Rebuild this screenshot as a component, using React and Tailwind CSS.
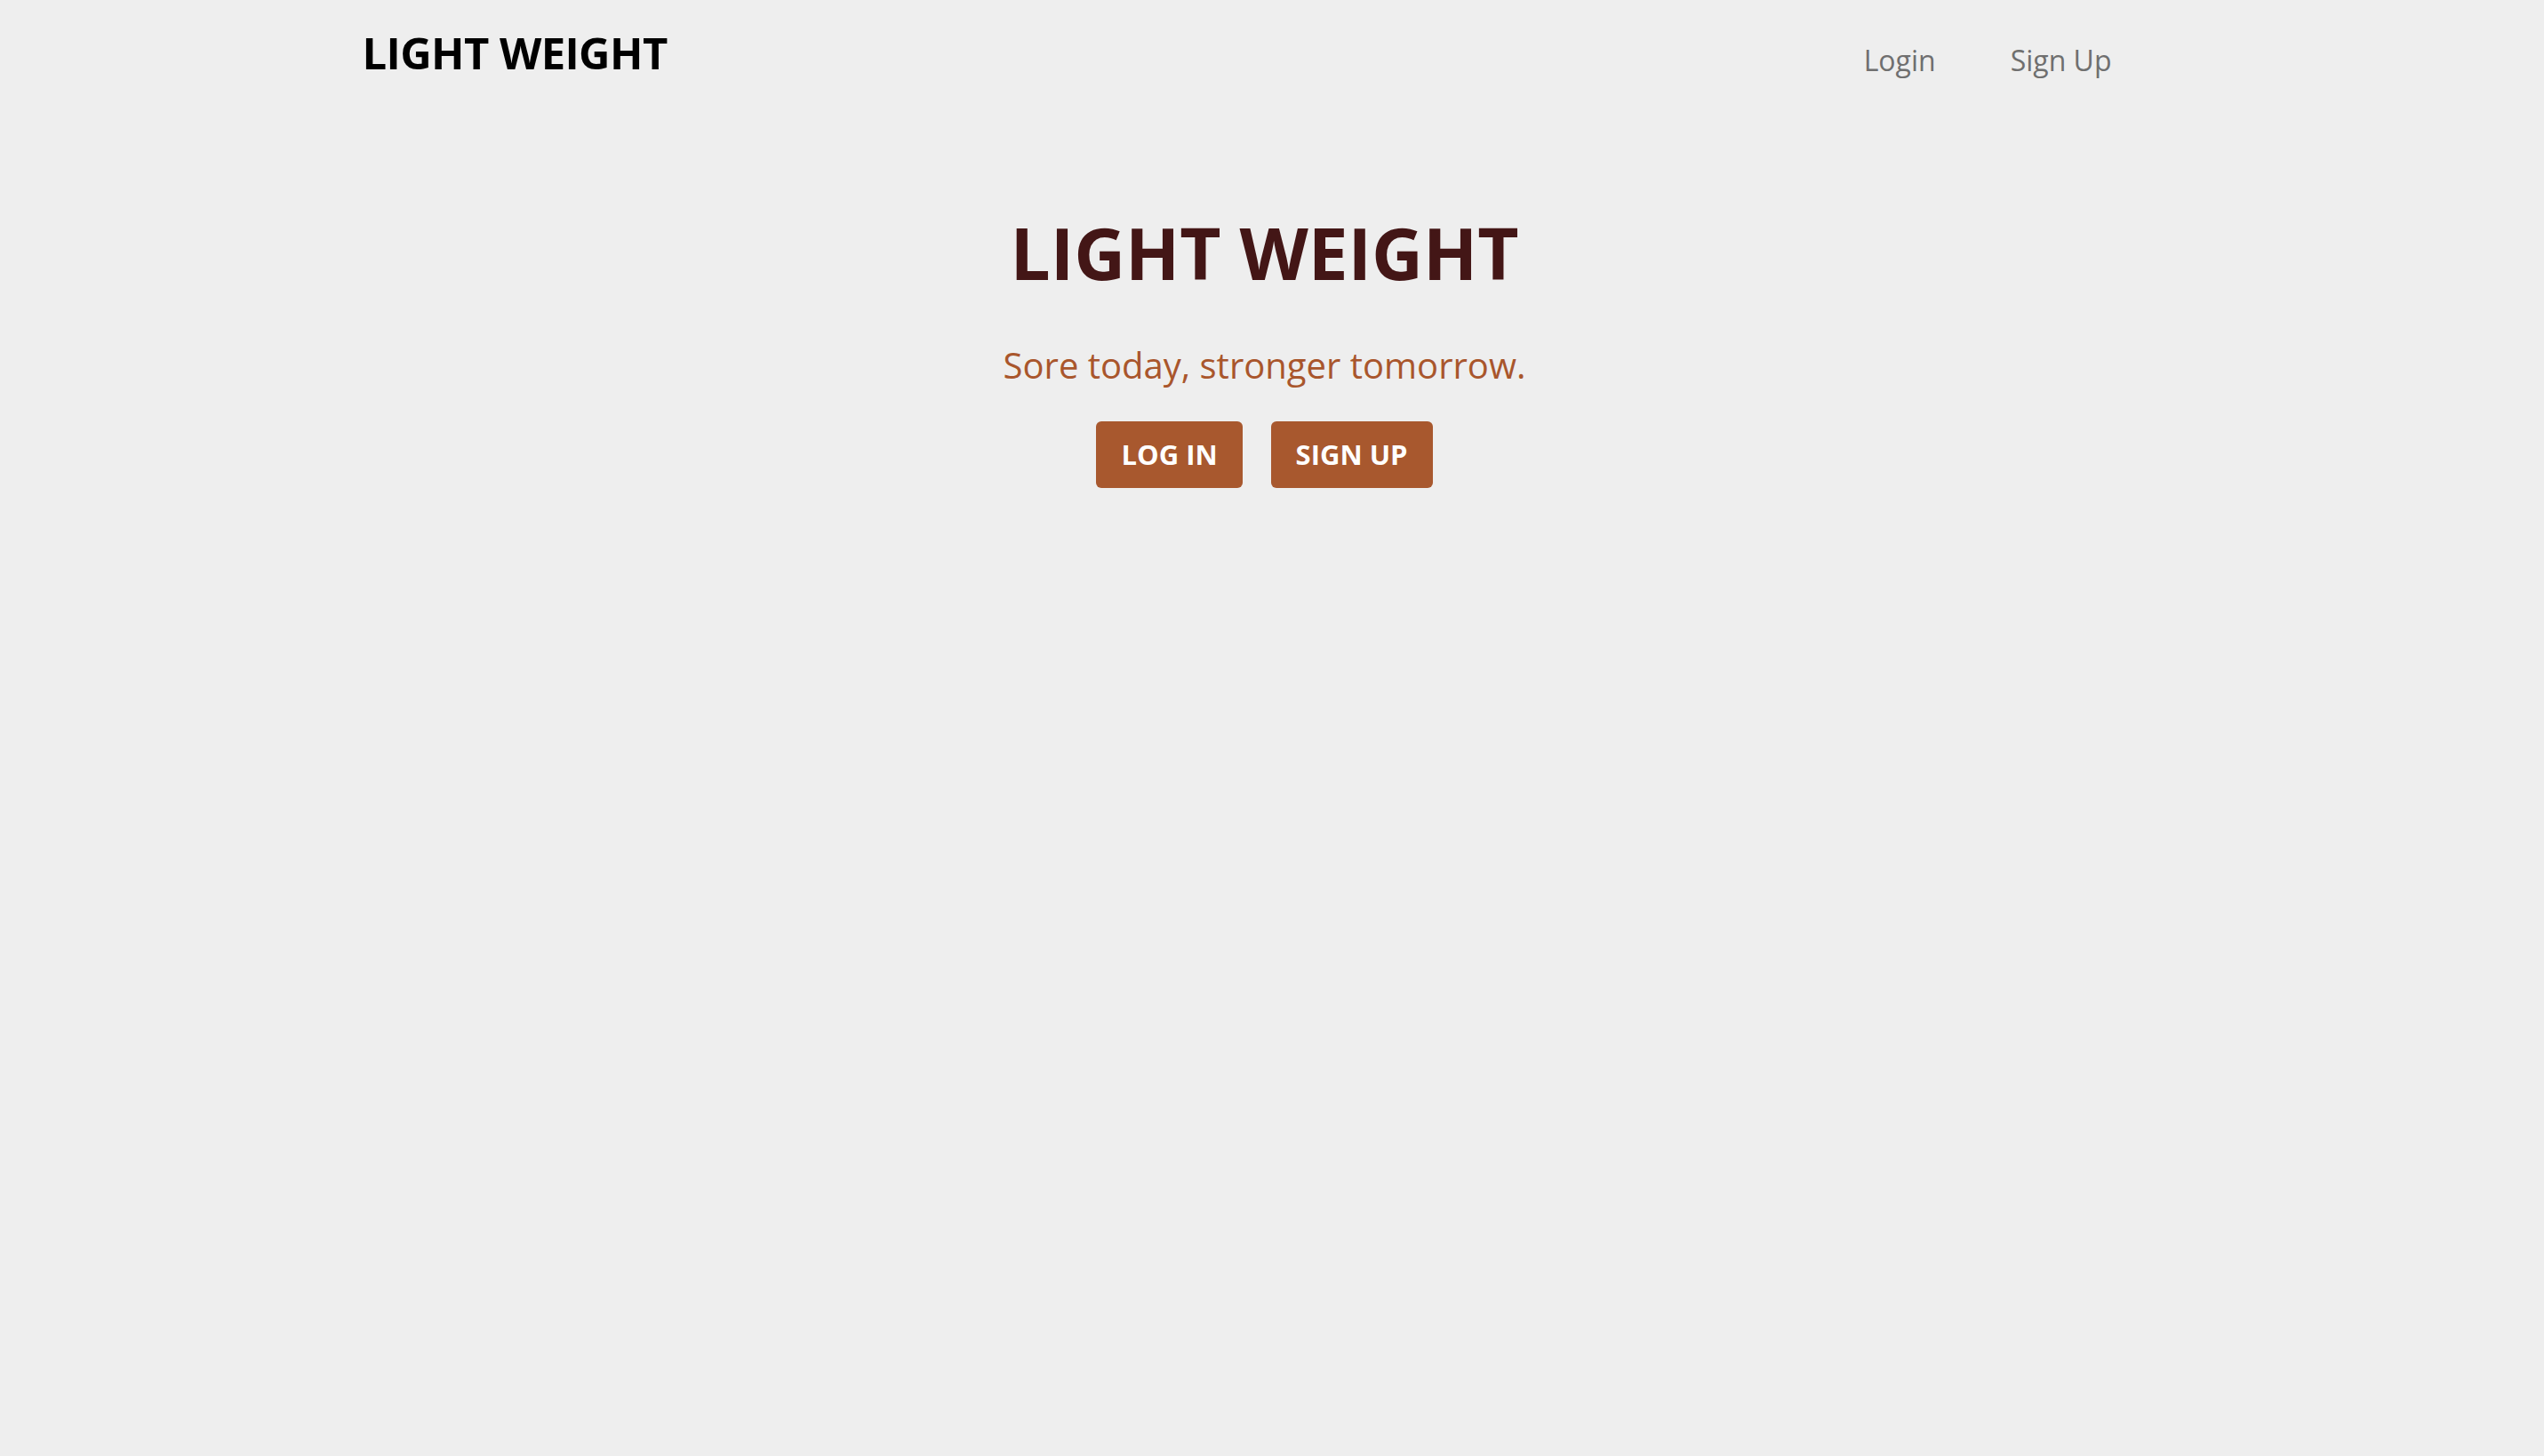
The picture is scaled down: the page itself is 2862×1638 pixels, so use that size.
export default function App() {
  return (
    <div className="min-h-screen w-full bg-[#eeeeee] pr-[17px]" style={{ fontFamily: "'Open Sans', sans-serif" }}>
      {/* top bar */}
      <header className="mx-auto flex h-[84px] w-[2030px] items-start justify-between pt-[35px]">
        <a href="#" className="text-[49px] font-bold leading-none tracking-[-0.6px] text-black">LIGHT WEIGHT</a>
        <nav className="mt-[17px] flex gap-[84px] pr-[62px] text-[32px] leading-none text-[#6f6f6f]">
          <a href="#">Login</a>
          <a href="#">Sign Up</a>
        </nav>
      </header>

      {/* hero */}
      <main className="flex flex-col items-center pt-[160px]">
        <h1 className="text-[80px] font-bold leading-none text-[#431616]">LIGHT WEIGHT</h1>
        <p className="mt-[67px] text-[40px] leading-none text-[#a9562c]">Sore today, stronger tomorrow.</p>
        <div className="mt-[43px] flex gap-[32px]">
          <button className="flex h-[75px] items-center rounded-[6px] bg-[#a8582e] px-[28px] text-[31px] font-bold leading-none text-white">
            LOG IN
          </button>
          <button className="flex h-[75px] items-center rounded-[6px] bg-[#a8582e] px-[28px] text-[31px] font-bold leading-none text-white">
            SIGN UP
          </button>
        </div>
      </main>
    </div>
  )
}
